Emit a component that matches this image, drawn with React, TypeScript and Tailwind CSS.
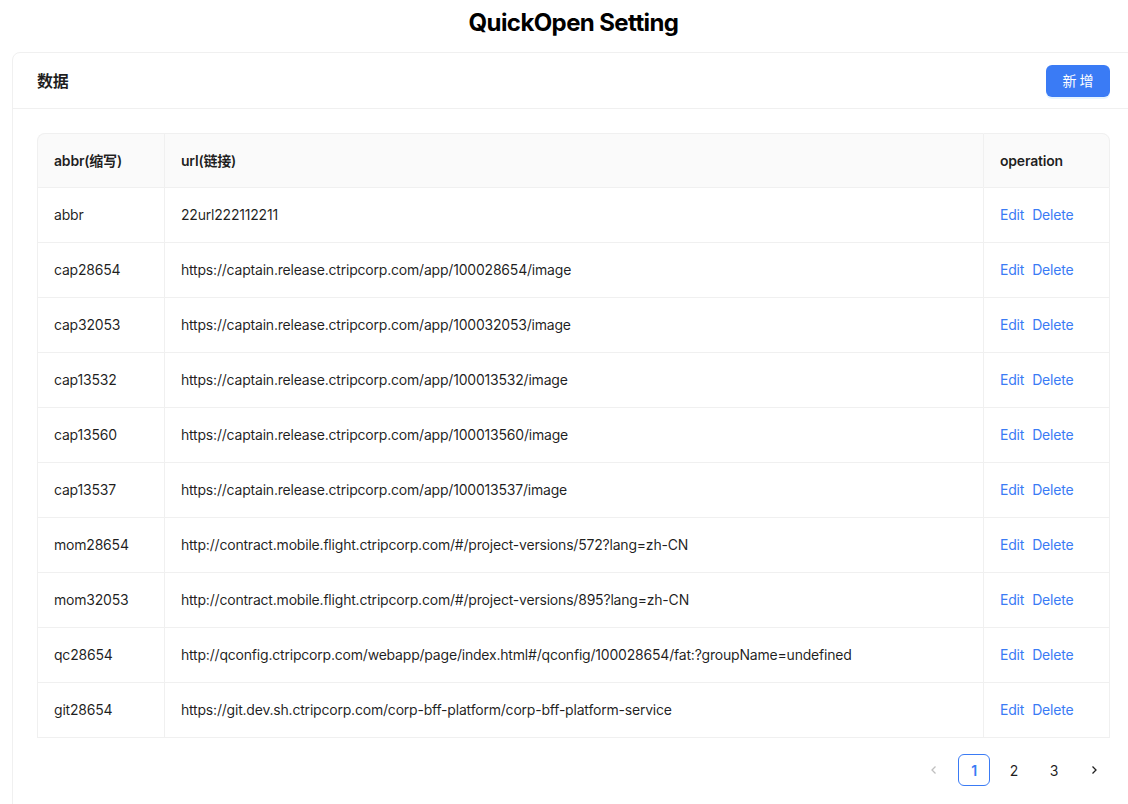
import React from "react";

interface Row {
  abbr: string;
  url: string;
}

const rows: Row[] = [
  { abbr: "abbr", url: "22url222112211" },
  { abbr: "cap28654", url: "https://captain.release.ctripcorp.com/app/100028654/image" },
  { abbr: "cap32053", url: "https://captain.release.ctripcorp.com/app/100032053/image" },
  { abbr: "cap13532", url: "https://captain.release.ctripcorp.com/app/100013532/image" },
  { abbr: "cap13560", url: "https://captain.release.ctripcorp.com/app/100013560/image" },
  { abbr: "cap13537", url: "https://captain.release.ctripcorp.com/app/100013537/image" },
  { abbr: "mom28654", url: "http://contract.mobile.flight.ctripcorp.com/#/project-versions/572?lang=zh-CN" },
  { abbr: "mom32053", url: "http://contract.mobile.flight.ctripcorp.com/#/project-versions/895?lang=zh-CN" },
  { abbr: "qc28654", url: "http://qconfig.ctripcorp.com/webapp/page/index.html#/qconfig/100028654/fat:?groupName=undefined" },
  { abbr: "git28654", url: "https://git.dev.sh.ctripcorp.com/corp-bff-platform/corp-bff-platform-service" },
];

export default function App() {
  return (
    <div
      className="w-[1147px] px-3 text-[14px] tracking-[-0.2px] text-[rgba(0,0,0,0.88)] bg-white"
      style={{ fontFamily: "Inter, 'Noto Sans CJK SC', sans-serif" }}
    >
      <h1 className="h-[44px] pt-[5px] text-center text-[24px] font-bold leading-[36px] tracking-[-0.6px] text-black mb-[8px]">
        QuickOpen Setting
      </h1>
      <div className="rounded-[8px] border border-[#f0f0f0]">
        <div className="flex items-center justify-between h-[56px] px-6 border-b border-[#f0f0f0]">
          <span className="text-[16px] font-semibold">数据</span>
          <button className="h-[32px] w-[64px] rounded-[6px] bg-[#3a7bf5] text-white text-[14px] tracking-[3px] pl-[3px] shadow-[0_2px_0_rgba(5,145,255,0.1)]">
            新增
          </button>
        </div>
        <div className="p-6 pb-[40px]">
          <table className="w-full border-separate border-spacing-0 text-left">
            <thead>
              <tr className="bg-[#fafafa]">
                <th className="h-[55px] w-[127px] px-4 pb-[1px] font-semibold border-t border-l border-b border-[#f0f0f0] rounded-tl-[8px]">abbr(缩写)</th>
                <th className="px-4 pb-[1px] font-semibold border-t border-l border-b border-[#f0f0f0]">url(链接)</th>
                <th className="w-[127px] px-4 pb-[1px] font-semibold border-t border-l border-r border-b border-[#f0f0f0] rounded-tr-[8px]">operation</th>
              </tr>
            </thead>
            <tbody>
              {rows.map((row, index) => (
                <tr key={index}>
                  <td className="h-[55px] px-4 pb-[2px] border-l border-b border-[#f0f0f0]">{row.abbr}</td>
                  <td className="px-4 pb-[2px] border-l border-b border-[#f0f0f0]">{row.url}</td>
                  <td className="px-4 pb-[2px] border-l border-r border-b border-[#f0f0f0] text-[#3a7bf5]">
                    <span className="mr-2">Edit</span>
                    <span>Delete</span>
                  </td>
                </tr>
              ))}
            </tbody>
          </table>
          <div className="flex justify-end items-center gap-2 mt-4">
            <span className="w-8 h-8 flex items-center justify-center text-[rgba(0,0,0,0.25)]">
              <svg width="12" height="12" viewBox="0 0 12 12" fill="none" stroke="currentColor" strokeWidth="1.3">
                <path d="M7.5 2.5 4 6l3.5 3.5" />
              </svg>
            </span>
            <span className="w-8 h-8 flex items-center justify-center rounded-[6px] border border-[#3a7bf5] text-[#3a7bf5] font-semibold">1</span>
            <span className="w-8 h-8 flex items-center justify-center">2</span>
            <span className="w-8 h-8 flex items-center justify-center">3</span>
            <span className="w-8 h-8 flex items-center justify-center">
              <svg width="12" height="12" viewBox="0 0 12 12" fill="none" stroke="currentColor" strokeWidth="1.3">
                <path d="M4.5 2.5 8 6l-3.5 3.5" />
              </svg>
            </span>
          </div>
        </div>
      </div>
    </div>
  );
}
